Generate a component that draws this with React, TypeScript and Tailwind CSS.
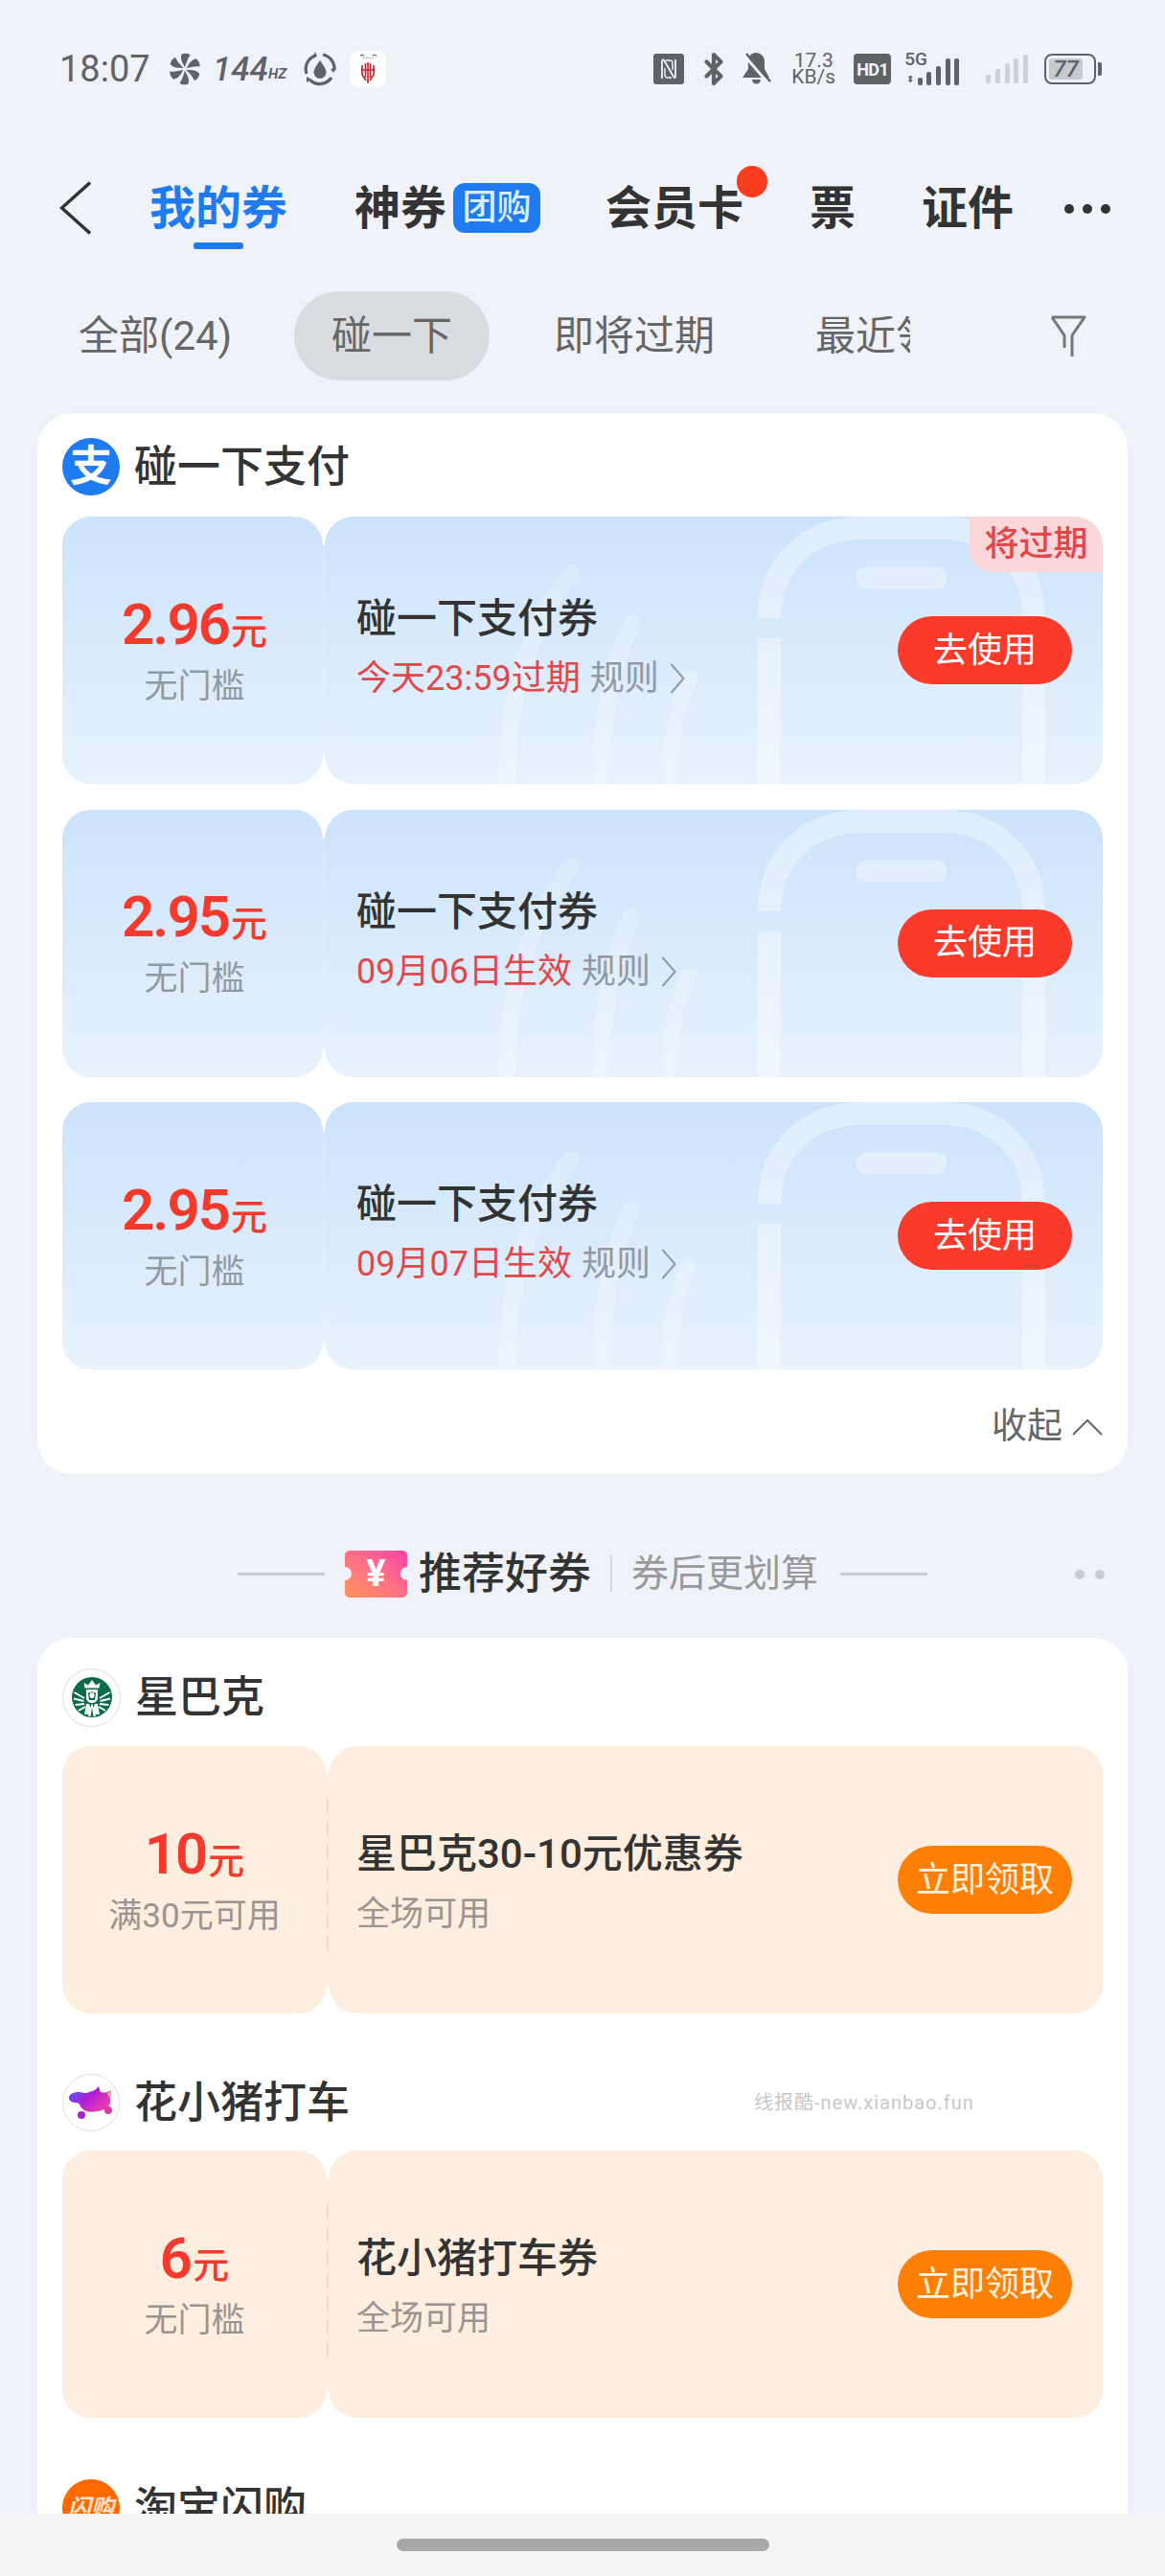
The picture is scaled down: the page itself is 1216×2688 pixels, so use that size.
import { Bluetooth } from "lucide-react";

const BLUE_COUPONS = [
  { amount: "2.96", note: "今天23:59过期", expiring: true },
  { amount: "2.95", note: "09月06日生效", expiring: false },
  { amount: "2.95", note: "09月07日生效", expiring: false },
];

function Fan() {
  return (
    <svg width="34" height="34" viewBox="-17 -17 34 34" fill="#5f6368">
      {[0, 60, 120, 180, 240, 300].map((r) => (
        <path key={r} transform={`rotate(${r})`} d="M0-1.500C-1-5-5.500-9-3.500-15.500C0-17 4-16.500 5.500-14.500C2.500-11 1.500-6 0-1.500Z" />
      ))}
    </svg>
  );
}

function SyncDrop() {
  return (
    <svg width="38" height="38" viewBox="0 0 38 38" fill="none" stroke="#5f6368" strokeWidth="3.200">
      <path d="M5 24A15 15 0 0 1 14 5" />
      <path d="M22 4A15 15 0 0 1 34 20" />
      <path d="M31 28A15 15 0 0 1 9 31" />
      <path d="M19 10C15 16 12.500 19 12.500 22.500A6.500 6.500 0 0 0 25.500 22.500C25.500 19 23 16 19 10Z" fill="#5f6368" stroke="none" />
      <path d="M14 1L16 6L11 7Z M36 18L33 23L30 19Z M5 33L5 27L11 30Z" fill="#5f6368" stroke="none" />
    </svg>
  );
}

function GameApp() {
  return (
    <div className="ml-[12px] h-[38px] w-[38px] rounded-[9px] bg-white">
      <svg width="38" height="38" viewBox="0 0 38 38" fill="none">
        <path d="M11 5.500C12 3.500 14 3.500 14.500 5.500M24 5.500C25 3.500 27 3.500 27.500 5.500" stroke="#555555" strokeWidth="1.200" />
        <path d="M13 7.500H25" stroke="#cccccc" strokeWidth="1.500" />
        <path d="M13 15V25L17 31M16.500 13V28M19 12V34M21.500 13V28M25 15V25L21 31M12 20H26" stroke="#c8232c" strokeWidth="1.600" />
      </svg>
    </div>
  );
}

function NfcBox() {
  return (
    <svg width="32" height="32" viewBox="0 0 32 32" fill="none">
      <rect width="32" height="32" rx="3" fill="#5f6368" />
      <path d="M9 26V8C9 6 10.500 6 11.500 7.500L21 24C22 25.500 23 25.500 23 24V6" stroke="#f0f3f8" strokeWidth="1.800" />
      <path d="M13 7H17C19 7 20 8 20 10V17" stroke="#f0f3f8" strokeWidth="1.400" />
      <path d="M19 25H15C13 25 12 24 12 22V15" stroke="#f0f3f8" strokeWidth="1.400" />
    </svg>
  );
}

function BellOff() {
  return (
    <svg width="31" height="36" viewBox="0 0 31 36" fill="#5f6368">
      <path d="M15 1C10 1 7 5 7 10V18L1 27H25L8 7L24 27H29L24 18V10C24 5 20 1 15 1Z" />
      <path d="M11 29H20A4.500 4.500 0 0 1 11 29Z" />
      <path d="M3 4L28 33" stroke="#f0f3f8" strokeWidth="3" />
      <path d="M5 2L30 31" stroke="#5f6368" strokeWidth="2.500" />
    </svg>
  );
}

function Signal({ color, bars }: { color: string; bars: number[] }) {
  return (
    <div className="flex items-end gap-[4.700px]">
      {bars.map((h, i) => (
        <span key={i} className="w-[5px] rounded-[2px]" style={{ height: h, background: color }} />
      ))}
    </div>
  );
}

function StatusBar() {
  return (
    <div className="flex h-[144px] items-center pl-[62px] pr-[66px] text-[#5f6368]">
      <span className="w-[114px] text-[38px] leading-none">18:07</span>
      <Fan />
      <span className="ml-[12px] text-[35px] font-medium italic leading-none">144</span>
      <span className="mt-[10px] text-[15px] font-bold italic leading-none">HZ</span>
      <span className="ml-[16px]">
        <SyncDrop />
      </span>
      <GameApp />
      <div className="ml-auto flex items-center">
        <NfcBox />
        <span className="ml-[13px]">
          <Bluetooth size={36} strokeWidth={2.800} />
        </span>
        <span className="ml-[11px]">
          <BellOff />
        </span>
        <div className="ml-[20px] w-[48px] text-center text-[21px] leading-[17px]">
          <div>17.3</div>
          <div>KB/s</div>
        </div>
        <div className="ml-[18px] flex h-[32px] w-[39px] items-center justify-center rounded-[4px] bg-[#5f6368] text-[18px] font-bold tracking-[-0.500px] text-[#f0f3f8]">
          HD1
        </div>
        <div className="relative ml-[14px] flex h-[34px] w-[57px] items-end justify-end">
          <span className="absolute left-0 top-[-3px] text-[19px] font-medium leading-none">5G</span>
          <span className="absolute bottom-[1px] left-[2px] text-[10px] leading-none">⬍</span>
          <Signal color="#5f6368" bars={[8, 14, 20, 28, 28]} />
        </div>
        <div className="ml-[28px]">
          <Signal color="#cdd0d4" bars={[9, 15, 21, 26, 30]} />
        </div>
        <div className="ml-[17px] flex items-center">
          <div className="flex h-[32px] w-[54px] items-center rounded-[8px] border-[2.500px] border-[#5f6368] p-[3px]">
            <div className="flex h-full w-[35px] items-center justify-center rounded-[3px] bg-[#c6c9cd] text-[24px] font-medium italic leading-none">
              77
            </div>
          </div>
          <span className="ml-[2px] h-[14px] w-[4px] rounded-r-[2px] bg-[#5f6368]" />
        </div>
      </div>
    </div>
  );
}

function TopNav() {
  return (
    <div className="flex h-[146px] items-center pl-[62px] pt-[2px] text-[48px] font-bold leading-none text-[#333333]">
      <svg className="mt-[-2px]" width="33" height="56" viewBox="0 0 33 56" fill="none" stroke="#333333" strokeWidth="3.500">
        <path d="M32 1.500L2.500 28L32 54.500" />
      </svg>
      <div className="relative ml-[61px] text-[#1f7cf0]">
        我的券
        <span className="absolute left-[46px] top-[59px] h-[7px] w-[52px] rounded-[3px] bg-[#1f7cf0]" />
      </div>
      <span className="ml-[70px]">神券</span>
      <span className="ml-[7px] mt-[-2px] flex h-[52px] w-[91px] items-center justify-center rounded-[12px] bg-[#1f7cf0] text-[36px] font-medium text-[#dcecff]">
        团购
      </span>
      <div className="relative ml-[68px]">
        会员卡
        <span className="absolute left-[137px] top-[-21px] h-[33px] w-[32px] rounded-full bg-[#f83c1e]" />
      </div>
      <span className="ml-[69px]">票</span>
      <span className="ml-[69px]">证件</span>
      <div className="ml-[53px] flex gap-[9px]">
        <span className="h-[10px] w-[10px] rounded-full bg-[#333333]" />
        <span className="h-[10px] w-[10px] rounded-full bg-[#333333]" />
        <span className="h-[10px] w-[10px] rounded-full bg-[#333333]" />
      </div>
    </div>
  );
}

function FilterBar() {
  return (
    <div className="mt-[14px] flex h-[93px] items-center pl-[82px] text-[42px] leading-none text-[#666666]">
      <span className="w-[225px]">全部(24)</span>
      <span className="flex h-[93px] w-[204px] items-center justify-center rounded-full bg-[#d9dce1]">碰一下</span>
      <span className="ml-[67px] w-[273px]">即将过期</span>
      <span className="w-[99px] overflow-hidden whitespace-nowrap">最近领取</span>
      <svg className="ml-[146px]" width="38" height="44" viewBox="0 0 38 44" fill="none" stroke="#777777" strokeWidth="3">
        <path d="M2 2H36L23 21V43M2 2L15 21V34" strokeLinejoin="round" />
      </svg>
    </div>
  );
}

function PhoneArt() {
  return (
    <svg className="absolute left-0 top-0" width="812" height="279" viewBox="0 0 812 279" fill="none" stroke="#ffffff">
      <g strokeOpacity="0.36">
        <path d="M464 105V106C464 50 505 12 560 12H645C700 12 740 50 740 106V279" strokeWidth="24" />
        <path d="M464 127V279" strokeWidth="24" />
        <path d="M566 64H638" strokeWidth="23" strokeLinecap="round" />
      </g>
      <g strokeOpacity="0.22" strokeLinecap="round">
        <path d="M257 60C215 110 190 190 190 279" strokeWidth="18" />
        <path d="M320 112C298 160 288 220 288 279" strokeWidth="18" />
        <path d="M381 170C366 200 360 240 360 279" strokeWidth="16" />
      </g>
    </svg>
  );
}

function Amount({ value, sub }: { value: string; sub: string }) {
  return (
    <div className="flex flex-col items-center pb-[3px]">
      <div className="flex items-baseline text-[#f53a2d]">
        <span className="text-[60px] font-semibold leading-[72px] tracking-[-2px]">{value}</span>
        <span className="ml-[2px] text-[38px] font-medium leading-[72px]">元</span>
      </div>
      <div className="text-[35px] leading-[44px]">{sub}</div>
    </div>
  );
}

function BlueCoupon({ amount, note, expiring }: { amount: string; note: string; expiring: boolean }) {
  return (
    <div className="flex h-[279px]">
      <div className="flex w-[272px] items-center justify-center rounded-[30px] bg-gradient-to-b from-[#cde3fb] to-[#e7f2fd] pl-[4px] text-[#8f9aa3]">
        <Amount value={amount} sub="无门槛" />
      </div>
      <div className="my-[30px] w-[2px] bg-gradient-to-b from-[#d6e8fb] to-[#e8f2fd]" />
      <div className="relative flex flex-1 items-center overflow-hidden rounded-[30px] bg-gradient-to-b from-[#cde3fb] to-[#e7f2fd] pl-[33px] pr-[32px]">
        <PhoneArt />
        <div className="relative pb-[10px]">
          <div className="text-[42px] font-medium leading-[58px] text-[#333333]">碰一下支付券</div>
          <div className="mt-[11px] flex items-center text-[36px] leading-[44px] text-[#e0484a]">
            {note}
            <span className="ml-[10px] text-[#909aa5]">规则</span>
            <svg className="ml-[11px]" width="16" height="32" viewBox="0 0 16 32" fill="none" stroke="#909aa5" strokeWidth="2">
              <path d="M1.500 1L14.500 16L1.500 31" />
            </svg>
          </div>
        </div>
        <button className="relative ml-auto h-[71px] w-[182px] rounded-full bg-[#fa3a2b] text-[36px] text-white">去使用</button>
        {expiring && (
          <span className="absolute right-0 top-0 flex h-[58px] w-[139px] items-center justify-center rounded-bl-[24px] bg-[#fbd7da] text-[36px] font-medium text-[#e0484a]">
            将过期
          </span>
        )}
      </div>
    </div>
  );
}

function OrangeCoupon({ value, sub, title }: { value: string; sub: string; title: string }) {
  return (
    <div className="flex h-[279px]">
      <div className="flex w-[276px] items-center justify-center rounded-[30px] bg-[#fdeee0] text-[#9b9490]">
        <Amount value={value} sub={sub} />
      </div>
      <div className="my-[30px] w-[2px] bg-[#fdeee0] py-[25px]">
        <div className="h-full bg-[repeating-linear-gradient(to_bottom,#f3d9d2_0,#f3d9d2_16px,transparent_16px,transparent_24px)]" />
      </div>
      <div className="flex flex-1 items-center rounded-[30px] bg-[#fdeee0] pl-[29px] pr-[32px]">
        <div className="pt-[2px]">
          <div className="text-[42px] font-medium leading-[58px] text-[#333333]">{title}</div>
          <div className="mt-[12px] text-[35px] leading-[44px] text-[#9b9490]">全场可用</div>
        </div>
        <button className="ml-auto h-[71px] w-[182px] rounded-full bg-[#fe7f06] text-[36px] text-[#fff3df]">立即领取</button>
      </div>
    </div>
  );
}

function Merchant({ logo, name, className }: { logo: React.ReactNode; name: string; className?: string }) {
  return (
    <div className={`flex h-[60px] items-center gap-[15px] ${className ?? ""}`}>
      {logo}
      <span className="text-[45px] font-medium leading-none text-[#333333]">{name}</span>
    </div>
  );
}

const AlipayLogo = (
  <div className="flex h-[60px] w-[60px] items-center justify-center rounded-full bg-[#1f7cf0] text-[44px] font-bold leading-none text-white">
    支
  </div>
);

const StarbucksLogo = (
  <div className="flex h-[61px] w-[61px] items-center justify-center rounded-full border border-[#dddddd] bg-white">
    <svg width="42" height="42" viewBox="0 0 42 42" fill="none">
      <circle cx="21" cy="21" r="21" fill="#0a6b4a" />
      <path d="M13.500 11.500L12.500 6L17 8.500L21 3L25 8.500L29.500 6L28.500 11.500Z" fill="#ffffff" />
      <path d="M15 13H27V21C27 25 24 27 21 27C18 27 15 25 15 21Z" fill="#ffffff" />
      <path d="M17 17C18 15 24 15 25 17L24 24H18Z" fill="#0a6b4a" />
      <ellipse cx="21" cy="19" rx="2.500" ry="3" fill="#ffffff" />
      <path d="M13 22L2.500 16M12.500 25L2 22.500M13 28L3.500 29M14 31L7 35M29 22L39.500 16M29.500 25L40 22.500M29 28L38.500 29M28 31L35 35" stroke="#ffffff" strokeWidth="2" />
      <path d="M15 28L13 39H29L27 28H24L21 35L18 28Z" fill="#ffffff" opacity="0.95" />
      <path d="M21 27L17 41H25Z" fill="#ffffff" />
      <path d="M21 32L19.500 41H22.500Z" fill="#0a6b4a" />
    </svg>
  </div>
);

const PigLogo = (
  <div className="flex h-[60px] w-[60px] items-center justify-center rounded-full border border-[#dddddd] bg-white">
    <svg width="50" height="36" viewBox="0 0 50 36">
      <defs>
        <linearGradient id="pig" x1="0" y1="0" x2="1" y2="0.700">
          <stop offset="0" stopColor="#2f6bff" />
          <stop offset="0.500" stopColor="#b01ed8" />
          <stop offset="1" stopColor="#f23fa8" />
        </linearGradient>
      </defs>
      <path d="M2 13C2 9 7 7 12 7C16 7 19 9 23 7C27 6 30 5 33 1C34 4 34 5 35 7C39 8 42 8 46 5C46 9 45 13 45 17C45 23 40 26 32 27C24 29 17 27 14 22C13 19 12 18 9 18C6 18 2 17 2 13Z" fill="url(#pig)" />
      <path d="M42 9L46 5L45 14Z" fill="#ffb08a" />
      <circle cx="15" cy="31" r="4" fill="#a426d8" />
      <circle cx="43" cy="26" r="4" fill="#d43aa8" />
    </svg>
  </div>
);

const FlashLogo = (
  <div className="flex h-[60px] w-[60px] items-center justify-center rounded-full bg-[#ff6a00] text-[24px] font-bold italic leading-none text-[#ffe2cc]">
    闪购
  </div>
);

function SectionTitle() {
  return (
    <div className="relative flex h-[171px] items-center justify-center pt-[37px]">
      <span className="h-[3px] w-[91px] bg-[#c8ccd0]" />
      <div className="relative ml-[21px] flex h-[49px] w-[65px] items-center justify-center overflow-hidden rounded-[5px] bg-gradient-to-tr from-[#ff9455] to-[#ff3ca8] text-[38px] font-bold leading-none text-white">
        ¥
        <span className="absolute left-[-7px] top-[17px] h-[14px] w-[14px] rounded-full bg-[#eff3f9]" />
        <span className="absolute right-[-7px] top-[17px] h-[14px] w-[14px] rounded-full bg-[#eff3f9]" />
      </div>
      <span className="ml-[12px] text-[45px] font-medium leading-none text-[#333333]">推荐好券</span>
      <span className="ml-[20px] h-[38px] w-[2px] bg-[#d5d8dc]" />
      <span className="ml-[20px] text-[39px] leading-none text-[#999999]">券后更划算</span>
      <span className="ml-[23px] h-[3px] w-[91px] bg-[#c8ccd0]" />
      <div className="absolute right-[63px] top-[100px] flex gap-[11px]">
        <span className="h-[10px] w-[10px] rounded-full bg-[#c8ccd2]" />
        <span className="h-[10px] w-[10px] rounded-full bg-[#c8ccd2]" />
      </div>
    </div>
  );
}

export default function App() {
  return (
    <div className="flex h-[2688px] w-[1216px] flex-col overflow-hidden bg-[#eff3f9] font-['Roboto','Noto_Sans_CJK_SC',sans-serif]">
      <main className="min-h-0 flex-1 overflow-hidden">
        <StatusBar />
        <TopNav />
        <FilterBar />

        <section className="mx-[39px] mt-[34px] rounded-[36px] bg-white px-[26px] pb-[19px] pt-[26px]">
          <Merchant logo={AlipayLogo} name="碰一下支付" />
          <div className="mt-[22px] flex flex-col gap-[26.500px]">
            {BLUE_COUPONS.map((c) => (
              <BlueCoupon key={c.note} {...c} />
            ))}
          </div>
          <div className="mt-[30px] flex h-[60px] items-center justify-end text-[37px] text-[#666666]">
            收起
            <svg className="ml-[10px]" width="32" height="18" viewBox="0 0 32 18" fill="none" stroke="#666666" strokeWidth="2">
              <path d="M1 17L16 2L31 17" />
            </svg>
          </div>
        </section>

        <SectionTitle />

        <section className="mx-[39px] rounded-t-[36px] bg-white px-[26px] pt-[32px]">
          <Merchant logo={StarbucksLogo} name="星巴克" />
          <div className="mt-[21px]">
            <OrangeCoupon value="10" sub="满30元可用" title="星巴克30-10元优惠券" />
          </div>
          <div className="relative mt-[63px]">
            <Merchant logo={PigLogo} name="花小猪打车" />
            <span className="absolute left-[722px] top-[16px] text-[20px] leading-[28px] tracking-[1px] text-[#c8c8c8]">
              线报酷-new.xianbao.fun
            </span>
          </div>
          <div className="mt-[20px]">
            <OrangeCoupon value="6" sub="无门槛" title="花小猪打车券" />
          </div>
          <Merchant logo={FlashLogo} name="淘宝闪购" className="mt-[64px]" />
        </section>
      </main>

      <div className="flex h-[65px] shrink-0 justify-center bg-[#f4f4f4] pt-[26px]">
        <span className="h-[13px] w-[389px] rounded-full bg-[#a8a8a8]" />
      </div>
    </div>
  );
}
